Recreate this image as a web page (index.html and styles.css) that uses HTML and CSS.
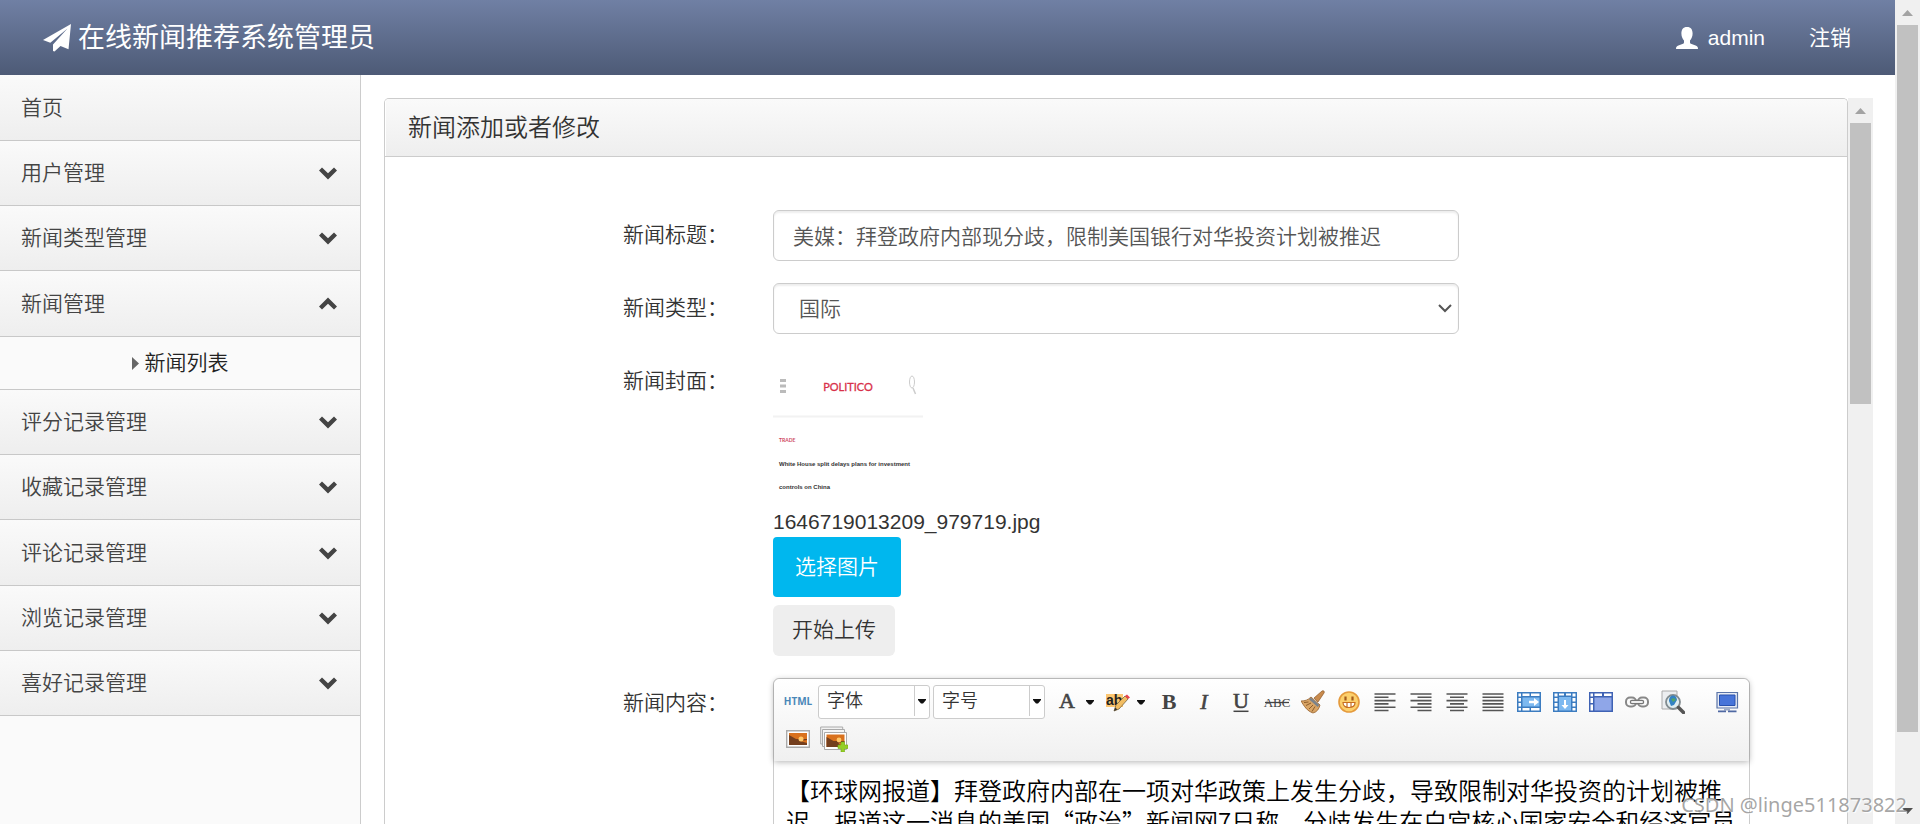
FILE: index.html
```html
<!DOCTYPE html>
<html lang="zh-CN">
<head>
<meta charset="utf-8">
<title>在线新闻推荐系统管理员</title>
<link rel="stylesheet" href="styles.css">
</head>
<body>
<svg class="defs" aria-hidden="true">
  <symbol id="chev" viewBox="0 0 20 14"><path d="M1 4.600 4 1.600 10 7.300 16 1.600 19 4.600 10 13.400z"/></symbol>
  <symbol id="tri" viewBox="0 0 8 5"><path d="M0 0h8v1L5 4.500H3L0 1z"/></symbol>
</svg>
<div class="app">
  <div class="site">
    <header class="topbar">
      <a class="brand" href="#">
        <svg class="brand-icon" viewBox="0 0 28 28"><path fill="currentColor" d="M28 0 25.500 25.300 17.500 22 11.500 27.500 10 27V20.500L24.500 4.500 7.300 18.700 0 16z"/></svg>
        <span>在线新闻推荐系统管理员</span>
      </a>
      <nav class="account">
        <a href="#"><svg class="user-icon" viewBox="0 0 22 22"><path fill="currentColor" d="M11 0c4 0 5.600 2.700 5.600 6.500 0 3-1.200 5.500-2.600 7v1.700c0 1 .6 1.500 1.600 1.900l4 1.500c1.600.6 2.400 1.400 2.400 3.400H0c0-2 .8-2.800 2.400-3.400l4-1.500c1-.4 1.600-.9 1.600-1.900v-1.700c-1.400-1.500-2.600-4-2.600-7C5.400 2.700 7 0 11 0z"/></svg><span>admin</span></a>
        <a href="#">注销</a>
      </nav>
    </header>
    <div class="below">
      <aside class="sidebar">
        <ul class="menu">
          <li><a class="item" href="#">首页</a></li>
          <li><a class="item" href="#">用户管理<svg class="chev"><use href="#chev"/></svg></a></li>
          <li><a class="item" href="#">新闻类型管理<svg class="chev"><use href="#chev"/></svg></a></li>
          <li><a class="item" href="#">新闻管理<svg class="chev up"><use href="#chev"/></svg></a>
            <a class="sub" href="#"><svg class="caret" viewBox="0 0 7 13"><path d="M0 0 7 6.500 0 13z"/></svg>新闻列表</a></li>
          <li><a class="item" href="#">评分记录管理<svg class="chev"><use href="#chev"/></svg></a></li>
          <li><a class="item" href="#">收藏记录管理<svg class="chev"><use href="#chev"/></svg></a></li>
          <li><a class="item" href="#">评论记录管理<svg class="chev"><use href="#chev"/></svg></a></li>
          <li><a class="item" href="#">浏览记录管理<svg class="chev"><use href="#chev"/></svg></a></li>
          <li><a class="item" href="#">喜好记录管理<svg class="chev"><use href="#chev"/></svg></a></li>
        </ul>
      </aside>
      <main class="content">
        <section class="panel">
          <h1 class="panel-title">新闻添加或者修改</h1>
          <form class="form">
            <label for="title">新闻标题：</label>
            <input class="field" id="title" type="text" value="美媒：拜登政府内部现分歧，限制美国银行对华投资计划被推迟">
            <label for="type">新闻类型：</label>
            <div class="select-wrap">
              <select class="field" id="type"><option>国际</option></select>
              <svg class="select-arrow" viewBox="0 0 14 9"><path d="M1 1 7 7 13 1"/></svg>
            </div>
            <label for="pick">新闻封面：</label>
            <div class="cover">
              <svg class="cover-pic" viewBox="0 0 150 150" role="img" aria-label="POLITICO">
                <path d="M7 24.500h6M7 30h6M7 35.500h6" stroke="#bbb" stroke-width="3"/>
                <text x="75" y="35" text-anchor="middle" class="pic-logo">POLITICO</text>
                <ellipse cx="139" cy="26" rx="2.500" ry="6" fill="none" stroke="#ccc"/><path d="M140 32l2.500 6" stroke="#ccc" stroke-width="1.500"/>
                <path d="M0 60.500h150" stroke="#f2f2f2" stroke-width="2"/>
                <text x="6" y="86" class="pic-tag">TRADE</text>
                <text x="6" y="110" class="pic-head">White House split delays plans for investment</text>
                <text x="6" y="133" class="pic-head">controls on China</text>
              </svg>
              <span class="filename">1646719013209_979719.jpg</span>
              <button class="pick" id="pick" type="button">选择图片</button>
              <button class="upload" type="button">开始上传</button>
            </div>
            <label for="body">新闻内容：</label>
            <div class="editor">
              <div class="toolbar">
                <button type="button" class="tool" title="HTML"><svg class="wide" viewBox="0 0 34 24"><text x="17" y="15" text-anchor="middle" class="t-html">HTML</text></svg></button>
                <button type="button" class="combo">字体<span class="combo-arrow"><svg class="tri"><use href="#tri"/></svg></span></button>
                <button type="button" class="combo">字号<span class="combo-arrow"><svg class="tri"><use href="#tri"/></svg></span></button>
                <button type="button" class="tool split" title="文字颜色"><svg viewBox="0 0 24 24"><text x="12" y="18" text-anchor="middle" class="t-serif">A</text></svg><svg class="tri"><use href="#tri"/></svg></button>
                <button type="button" class="tool split" title="文字背景"><svg viewBox="0 0 24 24"><path fill="#fbc671" d="M0 4h17v13H0z"/><text x="0" y="15" class="t-ab">ab</text><path d="M8 21 10 15 19 6 22 9 13 19z" fill="#f2bd62" stroke="#76633f" stroke-width=".8"/><path d="M8 21l1.300-3.500 2 2z" fill="#333"/><path d="M19 6 21 4.500 24 7.500 22 9z" fill="#e8424a"/></svg><svg class="tri"><use href="#tri"/></svg></button>
                <button type="button" class="tool" title="粗体"><svg viewBox="0 0 24 24"><text x="12" y="19" text-anchor="middle" class="t-serif bold">B</text></svg></button>
                <button type="button" class="tool" title="斜体"><svg viewBox="0 0 24 24"><text x="11" y="19" text-anchor="middle" class="t-serif italic">I</text></svg></button>
                <button type="button" class="tool" title="下划线"><svg viewBox="0 0 24 24"><text x="12" y="18" text-anchor="middle" class="t-serif">U</text><path d="M4.500 21.300h15" stroke="#444" stroke-width="1.500"/></svg></button>
                <button type="button" class="tool" title="删除线"><svg class="wide" viewBox="0 0 34 24"><text x="17" y="17" text-anchor="middle" class="t-abc">ABC</text><path d="M5 12.500h24" stroke="#444" stroke-width="1.300"/></svg></button>
                <button type="button" class="tool" title="格式刷"><svg viewBox="0 0 24 24"><path fill="#c98b4d" stroke="#8d5928" stroke-width=".7" d="M13 8 21 1c1.500-1 3 .6 2 2l-6 9z"/><path fill="#d9a566" stroke="#96602b" stroke-width=".8" d="M0 11c4 0 7-1 10-4l9 8c-1 4-3 7-7 8C6 21 3 16 0 11z"/><path d="M9 8.500 17.500 16" stroke="#7c838b" stroke-width="2.600"/><path d="M3 12.500l4.500-.5M5 15.500l5-2.500M8 19l4-4M11 21.500l3-5" stroke="#865323" stroke-width=".9"/></svg></button>
                <button type="button" class="tool" title="表情"><svg viewBox="0 0 24 24"><circle cx="12" cy="12" r="10" fill="#fcd06c" stroke="#e59a3c" stroke-width="1.600"/><path fill="#fff" stroke="#c76f20" stroke-width="1.200" d="M6 12.500h12c0 3.800-3 5-6 5s-6-1.200-6-5zM10 12.500v5M14 12.500v5"/><path stroke="#a45b1c" stroke-width="2.200" d="M8.500 6.500v4M15.500 6.500v4"/></svg></button>
                <button type="button" class="tool" title="左对齐"><svg viewBox="0 0 24 24"><path class="ln" d="M1.500 4h21M1.500 7.300h14M1.500 10.600h21M1.500 13.900h14M1.500 17.200h21M1.500 20.500h14"/></svg></button>
                <button type="button" class="tool" title="右对齐"><svg viewBox="0 0 24 24"><path class="ln" d="M1.500 4h21M8.500 7.300h14M1.500 10.600h21M8.500 13.900h14M1.500 17.200h21M8.500 20.500h14"/></svg></button>
                <button type="button" class="tool" title="居中"><svg viewBox="0 0 24 24"><path class="ln" d="M1.500 4h21M5 7.300h14M1.500 10.600h21M5 13.900h14M1.500 17.200h21M5 20.500h14"/></svg></button>
                <button type="button" class="tool" title="两端对齐"><svg viewBox="0 0 24 24"><path class="ln" d="M1.500 4h21M1.500 7.300h21M1.500 10.600h21M1.500 13.900h21M1.500 17.200h21M1.500 20.500h21"/></svg></button>
                <button type="button" class="tool" title="插入行"><svg viewBox="0 0 24 24"><path fill="#3c7cc0" d="M0 2h24v20H0z"/><path fill="#fff" d="M1.500 3.500h2.500v3H1.500zM1.500 8h2.500v3.500H1.500zM1.500 13h2.500v3.500H1.500zM1.500 18h2.500v2.500H1.500zM5.500 3.500h7v2.500h-7zM14 3.500h8.500v2.500H14zM5.500 18h7v2.500h-7zM14 18h8.500v2.500H14z"/><path fill="#7db9f0" d="M5.500 7.500h17v9h-17z"/><path fill="#fff" d="M12 10.700h5V8l5 4-5 4v-2.700h-5z"/></svg></button>
                <button type="button" class="tool" title="插入列"><svg viewBox="0 0 24 24"><path fill="#3c7cc0" d="M0 2h24v20H0z"/><path fill="#fff" d="M1.500 3.500h3v3h-3zM1.500 8h3v3.500h-3zM1.500 13h3v3.500h-3zM1.500 18h3v2.500h-3zM19.500 3.500h3v3h-3zM19.500 8h3v3.500h-3zM19.500 13h3v3.500h-3zM19.500 18h3v2.500h-3zM6 3.500h5v2H6zM13 3.500h5v2h-5z"/><path fill="#7db9f0" d="M6 7h12v13.500H6z"/><path fill="#fff" d="M11 10h2v5h2.500l-3.500 4-3.500-4H11z"/></svg></button>
                <button type="button" class="tool" title="表格"><svg viewBox="0 0 24 24"><path fill="#3f62b4" d="M0 2h24v20H0z"/><path fill="#fff" d="M1.500 3.500H4v3H1.500zM1.500 8H4v5H1.500zM1.500 14.500H4v6H1.500zM5.500 3.500h7.500v2.500H5.500zM15 3.500h7.500v2.500H15z"/><path fill="#8fa6e8" d="M5.500 7.500h17v13h-17z"/></svg></button>
                <button type="button" class="tool" title="超级链接"><svg viewBox="0 0 24 24" fill="none" stroke="#888" stroke-width="2"><rect x="1" y="7.500" width="10" height="9" rx="4"/><rect x="13" y="7.500" width="10" height="9" rx="4"/><path stroke="#777" stroke-width="4.500" stroke-linecap="round" d="M7 12h10"/><path stroke="#eee" stroke-width="2" stroke-linecap="round" d="M7 12h10"/></svg></button>
                <button type="button" class="tool" title="预览"><svg viewBox="0 0 24 24"><path fill="#eceef0" stroke="#aaa" d="M1 1h15v18H1z"/><circle cx="12" cy="12" r="7" fill="#e0edf1" stroke="#818b8f" stroke-width="1.800"/><path fill="#3382c4" d="M8 11a4 5 0 0 1 8-1l-3 5-3 1z"/><path fill="#51a369" d="M10 9l3-1 2 2-3 2z"/><path stroke="#555" stroke-width="3.500" stroke-linecap="round" d="M17.500 17.500 22.500 22.500"/></svg></button>
                <span class="sep"></span>
                <button type="button" class="tool" title="全屏"><svg viewBox="0 0 24 24"><path fill="#e7ebf4" stroke="#5a74a8" stroke-width="1.200" d="M2 2.500h20.500v15.500H2z"/><path fill="#4774d9" stroke="#2951ad" d="M4.500 5h15.500v10.500H4.500z"/><path fill="#9ba9c5" d="M9 18.500h6v2H9z"/><path fill="#4f69a3" d="M3 20.500h8v1.800H3zM13 20.500h8.500v1.800H13z"/></svg></button>
                <button type="button" class="tool" title="图片"><svg viewBox="0 0 24 24"><path fill="#fff" stroke="#aaa" stroke-width="1.400" d="M.7 3.700h22.600v16.600H.7z"/><path fill="#d9711d" d="M3 6h18v12H3z"/><path fill="#743f1e" d="M3 8l7 4h11v1l-7 1 7 2v2H3z"/><circle cx="15" cy="12" r="2.500" fill="#ffc768"/></svg></button>
                <button type="button" class="tool" title="批量图片"><svg class="stack" viewBox="0 0 28 26"><path fill="#f2f2f2" stroke="#aaa" d="M.7 1h22v17h-22z"/><path fill="#f5f5f5" stroke="#aaa" d="M2.500 3.500h22v17h-22z"/><path fill="#fff" stroke="#aaa" d="M4.500 6.500h22v17h-22z"/><path fill="#d9711d" d="M6.500 8.500h18v12.500h-18z"/><path fill="#743f1e" d="M6.500 11l7 4h11v1l-6 1 3 4h-15z"/><circle cx="19" cy="14" r="2.400" fill="#ffc768"/><path fill="#94cf27" stroke="#75ad16" stroke-width=".6" d="M21 16h3.500v3H28v3.500h-3.500V26H21v-3.500h-3V19h3z"/></svg></button>
              </div>
              <div class="editor-body" id="body" contenteditable="true" role="textbox" aria-label="新闻内容">【环球网报道】拜登政府内部在一项对华政策上发生分歧，导致限制对华投资的计划被推迟。报道这一消息的美国“政治”新闻网7日称，分歧发生在白宫核心国家安全和经济官员</div>
            </div>
          </form>
        </section>
        <div class="scrollbar inner" aria-hidden="true">
          <svg class="sb-arrow" viewBox="0 0 25 25"><path fill="#a3a3a3" d="M7 16 12.500 10 18 16z"/></svg>
          <div class="thumb"></div>
        </div>
      </main>
    </div>
  </div>
  <div class="scrollbar outer" aria-hidden="true">
    <svg class="sb-arrow" viewBox="0 0 25 25"><path fill="#a3a3a3" d="M7 16 12.500 10 18 16z"/></svg>
    <div class="thumb"></div>
    <svg class="sb-arrow end" viewBox="0 0 25 25"><path fill="#505050" d="M7 9 12.500 15 18 9z"/></svg>
  </div>
  <div class="watermark">CSDN @linge511873822</div>
</div>
</body>
</html>
```
FILE: styles.css
```css
* { box-sizing: border-box; }

body {
  margin: 0;
  font: 21px/30px "Liberation Sans", "Noto Sans CJK SC", sans-serif;
  font-weight: 350;
  color: #333;
  background: #fff;
}

a { color: inherit; text-decoration: none; }
button, input, select { font: inherit; color: inherit; }
.defs { position: absolute; width: 0; height: 0; }

.app { position: relative; display: flex; height: 100vh; overflow: hidden; }
.site { flex: 1; min-width: 0; display: flex; flex-direction: column; }

/* Top bar */
.topbar {
  display: flex;
  align-items: center;
  justify-content: space-between;
  flex: none;
  height: 75px;
  padding: 0 44px 0 43px;
  color: #fff;
  background: linear-gradient(#7080a4, #4d5a76);
}
.brand { display: flex; align-items: center; gap: 7px; font-size: 27px; font-weight: 400; }
.brand-icon { width: 28px; height: 28px; }
.account { display: flex; gap: 44px; font-weight: 400; }
.account a { display: flex; align-items: center; gap: 10px; }
.user-icon { width: 22px; height: 22px; }

/* Sidebar */
.below { flex: 1; min-height: 0; display: flex; }
.sidebar { flex: none; width: 361px; background: #fafafa; border-right: 1px solid #ccc; }
.menu { margin: 0; padding: 0; list-style: none; }
.item {
  display: flex;
  align-items: center;
  justify-content: space-between;
  height: 65px;
  padding: 0 22px 0 21px;
  color: #444;
  background: linear-gradient(#fafafa, #eee);
  border-bottom: 1px solid #c8c8c8;
}
.menu li:nth-child(3n + 1) .item { height: 66px; }
.chev { width: 20px; height: 14px; fill: #444; }
.chev.up { transform: rotate(180deg); }
.sub {
  display: flex;
  align-items: center;
  justify-content: center;
  gap: 6px;
  height: 53px;
  color: #222;
  border-bottom: 1px solid #c8c8c8;
}
.caret { width: 7px; height: 13px; fill: #666; }

/* Panel */
.content { flex: 1; min-width: 0; display: flex; padding: 23px 22px 0 23px; }
.panel {
  flex: 1;
  min-width: 0;
  overflow: hidden;
  border: 1px solid #ccc;
  border-bottom: 0;
  border-radius: 5px 5px 0 0;
}
.panel-title {
  margin: 0;
  padding: 14px 22px 13px;
  font-size: 24px;
  line-height: 30px;
  font-weight: 350;
  color: #333;
  background: linear-gradient(#fafafa, #eee);
  border-left: 1px solid #fff;
  box-shadow: 0 1px 0 #ccc;
}

/* Form */
.form {
  display: grid;
  grid-template-columns: 150px minmax(0, 1fr);
  row-gap: 22px;
  align-items: start;
  padding: 54px 97px 0 238px;
}
.form > label { padding: 10px 0; }
.field {
  display: block;
  width: 100%;
  max-width: 686px;
  height: 51px;
  padding: 0 19px 1px;
  color: #555;
  background: #fff;
  border: 1px solid #ccc;
  border-radius: 6px;
  box-shadow: inset 0 2px 2px #eee;
}
.select-wrap { position: relative; max-width: 686px; }
select.field { appearance: none; padding: 0 25px; }
.select-arrow {
  position: absolute;
  right: 7px;
  top: 21px;
  width: 14px;
  height: 9px;
  fill: none;
  stroke: #555;
  stroke-width: 2;
  pointer-events: none;
}
.cover { display: flex; flex-direction: column; align-items: flex-start; }
.cover-pic { width: 150px; height: 150px; }
.pic-logo { font: 400 11px Lato, sans-serif; fill: #d8304a; stroke: #d8304a; stroke-width: 0.3; }
.pic-tag { font: 700 5px Lato, sans-serif; fill: #cf4a60; }
.pic-head { font: 700 6px "Liberation Sans", sans-serif; fill: #333; }
.filename { height: 31px; line-height: 32px; }
.pick {
  height: 60px;
  padding: 0 22px;
  color: #fff;
  background: #00b7ee;
  border: 0;
  border-radius: 4px;
}
.upload {
  height: 51px;
  margin-top: 8px;
  padding: 0 19px 1px;
  background: #eee;
  border: 0;
  border-radius: 6px;
}

/* Rich text editor */
.editor { border: 1px solid #ccc; border-radius: 6px 6px 0 0; }
.toolbar {
  display: flex;
  flex-wrap: wrap;
  row-gap: 1px;
  padding: 5px 3px 4px 6px;
  background: linear-gradient(#fff, #f0f0f0);
  border-radius: 6px 6px 0 0;
  box-shadow: 0 1px 6px rgba(0, 0, 0, 0.3);
}
.tool {
  display: flex;
  align-items: center;
  justify-content: center;
  width: 36px;
  height: 36px;
  padding: 0;
  background: none;
  border: 0;
}
.tool > svg { flex: none; width: 24px; height: 24px; }
.tool > .wide { width: 34px; }
.tool > .stack { width: 28px; height: 26px; }
.tool.split { width: 51px; gap: 7px; }
.tool > .tri, .tri { width: 8px; height: 5px; fill: #111; }
.combo {
  display: flex;
  align-items: center;
  justify-content: space-between;
  width: 112px;
  height: 34px;
  margin: 1px 1px 0 2px;
  padding: 0 0 2px 8px;
  font-size: 18px;
  line-height: 28px;
  background: #fff;
  border: 1px solid #ccc;
  border-radius: 3px;
}
.combo-arrow {
  display: flex;
  align-items: center;
  justify-content: center;
  width: 15px;
  height: 30px;
  border-left: 1px solid #ccc;
}
.combo + .tool { margin-left: 3px; }
.sep { width: 18px; height: 36px; }
.ln { stroke: #555; stroke-width: 1.6; }
.t-html { font: 700 10px "Open Sans", sans-serif; fill: #4a87b8; }
.t-serif { font: 22px "Liberation Serif", serif; fill: #444; stroke: #444; stroke-width: 0.6; }
.t-serif.bold { font-weight: 700; stroke: none; }
.t-serif.italic { font-style: italic; }
.t-ab { font: 700 14px "Liberation Sans", sans-serif; fill: #222; }
.t-abc { font: 400 13px "Liberation Serif", serif; fill: #444; }
.editor-body {
  height: 300px;
  padding: 13px 12px;
  font: 24px/31px "Noto Sans CJK SC", sans-serif;
  font-weight: 350;
  color: #000;
}

/* Scroll bars */
.scrollbar { flex: none; display: flex; flex-direction: column; width: 25px; background: #f0f0f0; }
.sb-arrow { flex: none; width: 25px; height: 25px; }
.thumb { margin: 0 2px; background: #c1c1c1; }
.inner .thumb { height: 38.7%; }
.outer .thumb { height: 85.8%; }
.sb-arrow.end { margin-top: auto; }

.watermark {
  position: absolute;
  right: 13px;
  bottom: 4px;
  font: 20px/30px "Noto Sans", sans-serif;
  color: rgba(150, 150, 150, 0.85);
  text-shadow: 1px 1px 1px #fff;
}
```
